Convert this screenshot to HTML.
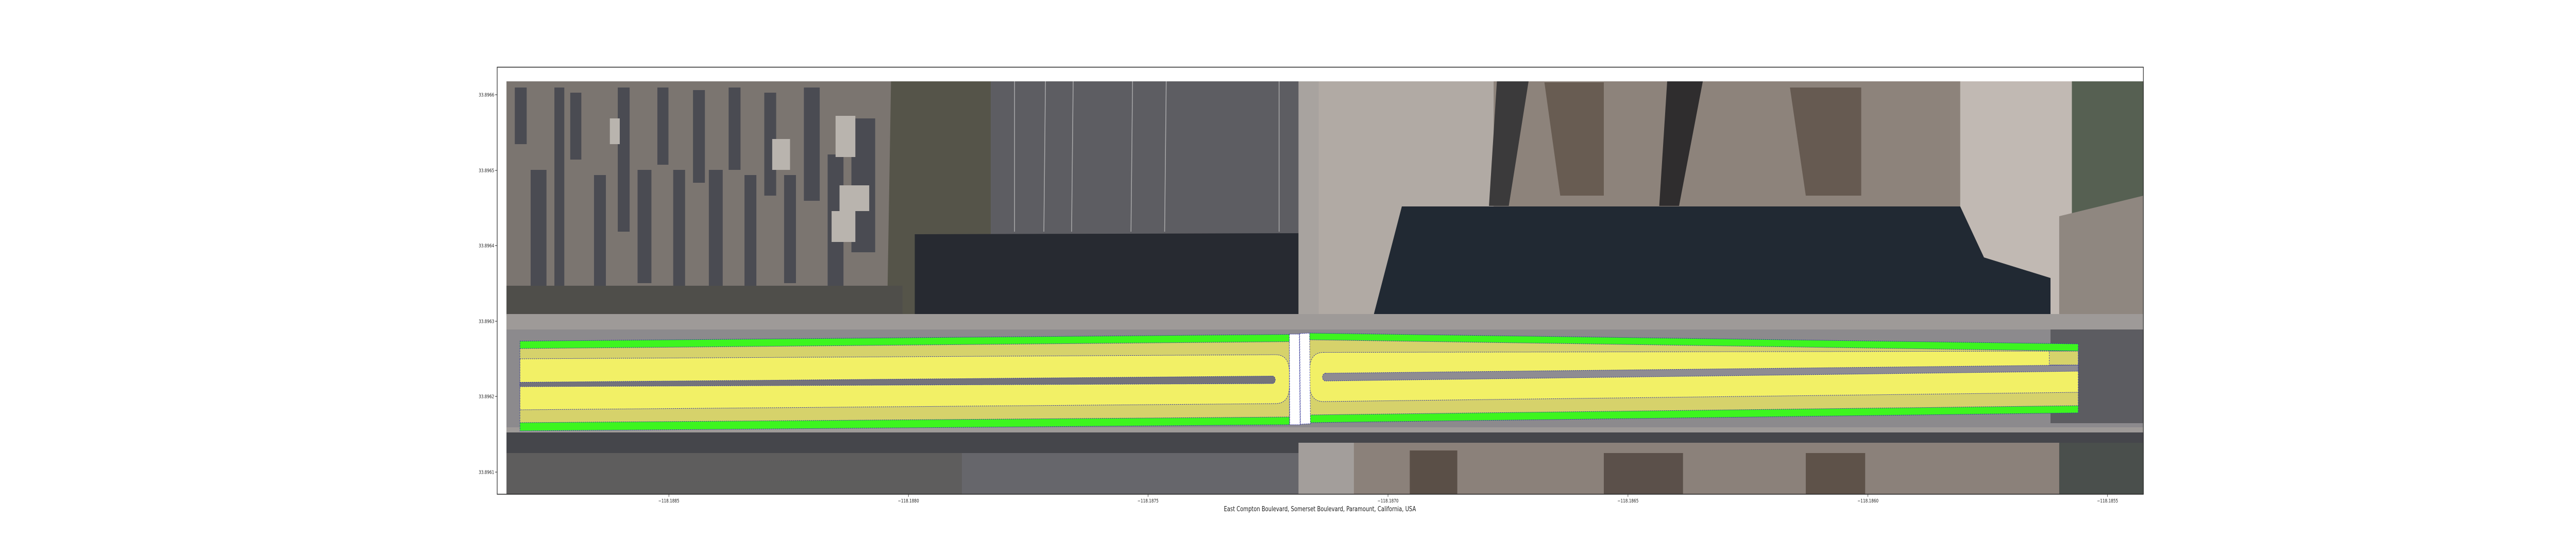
<!DOCTYPE html>
<html><head><meta charset="utf-8"><style>
html,body{margin:0;padding:0;background:#fff;width:100%;height:100%;overflow:hidden;}
svg{display:block;position:absolute;left:0;top:0;width:100vw;height:100vh;}
text{font-family:"DejaVu Sans","Liberation Sans",sans-serif;fill:#222;}
</style></head><body>
<svg viewBox="0 0 6505 1080" preserveAspectRatio="none" xmlns="http://www.w3.org/2000/svg">
<rect width="6505" height="1080" fill="#fff"/>
<defs><clipPath id="img"><rect x="1279" y="158" width="4134" height="802"/></clipPath></defs>
<g clip-path="url(#img)">
<rect x="1279" y="158" width="4134" height="802" fill="#77726f"/>
<rect x="1279" y="158" width="1000" height="455" fill="#7b7570"/>
<g fill="#4a4b52">
<rect x="1300" y="170" width="30" height="110"/><rect x="1340" y="330" width="40" height="230"/>
<rect x="1400" y="170" width="25" height="430"/><rect x="1440" y="180" width="28" height="130"/>
<rect x="1500" y="340" width="30" height="230"/><rect x="1560" y="170" width="30" height="280"/>
<rect x="1610" y="330" width="35" height="220"/><rect x="1660" y="170" width="28" height="150"/>
<rect x="1700" y="330" width="30" height="250"/><rect x="1750" y="175" width="30" height="180"/>
<rect x="1790" y="330" width="35" height="240"/><rect x="1840" y="170" width="30" height="160"/>
<rect x="1880" y="340" width="30" height="220"/><rect x="1930" y="180" width="30" height="200"/>
<rect x="1980" y="340" width="30" height="210"/><rect x="2030" y="170" width="40" height="220"/>
<rect x="2090" y="300" width="40" height="300"/><rect x="2150" y="230" width="60" height="260"/>
</g>
<g fill="#b9b4ae">
<rect x="2110" y="225" width="50" height="80"/><rect x="2120" y="360" width="75" height="50"/>
<rect x="2100" y="410" width="60" height="60"/><rect x="2250" y="190" width="25" height="100"/>
<rect x="1950" y="270" width="45" height="60"/><rect x="1540" y="230" width="25" height="50"/>
</g>
<polygon points="2250,158 2502,158 2502,453 2440,620 2240,620" fill="#555449"/>
<rect x="1279" y="555" width="1000" height="58" fill="#4f4e4a"/>
<rect x="2502" y="158" width="777" height="300" fill="#5d5d62"/>
<polygon points="2310,455 3279,453 3279,625 2310,625" fill="#272a31"/>
<g stroke="#c8c8c8" stroke-width="2" opacity="0.7">
<line x1="2562" y1="158" x2="2562" y2="450"/><line x1="2640" y1="158" x2="2636" y2="450"/>
<line x1="2710" y1="158" x2="2706" y2="450"/><line x1="2860" y1="158" x2="2856" y2="450"/>
<line x1="2945" y1="158" x2="2941" y2="450"/><line x1="3230" y1="158" x2="3230" y2="450"/>
</g>
<polygon points="3279,158 3370,158 3330,625 3279,625" fill="#a8a39f"/>
<polygon points="3330,158 3772,158 3772,401 3464,626 3330,626" fill="#b1aaa4"/>
<rect x="3772" y="158" width="1180" height="245" fill="#8d837b"/>
<polygon points="3780,158 3860,158 3810,400 3760,400" fill="#3b3a3b"/>
<polygon points="4210,158 4300,158 4240,400 4190,400" fill="#2f2d2e"/>
<polygon points="3900,160 4050,160 4050,380 3940,380" fill="#5f5248" opacity="0.8"/>
<polygon points="4520,170 4700,170 4700,380 4560,380" fill="#5c5047" opacity="0.8"/>
<rect x="4950" y="158" width="282" height="470" fill="#c1b9b3"/>
<polygon points="3540,401 4950,401 5010,500 5178,540 5178,626 3464,626" fill="#212933"/>
<rect x="5232" y="158" width="181" height="470" fill="#566052"/>
<polygon points="5200,420 5413,380 5413,626 5200,626" fill="#8f8780"/>
<rect x="1279" y="610" width="4134" height="236" fill="#9e9a98"/>
<rect x="1279" y="640" width="4134" height="190" fill="#8c8a8d"/>
<rect x="5178" y="640" width="235" height="182" fill="#5c5c61"/>
<rect x="1279" y="840" width="4134" height="40" fill="#45464b"/>
<rect x="1279" y="880" width="1150" height="80" fill="#5e5d5d"/>
<rect x="2429" y="880" width="850" height="80" fill="#66666b"/>
<rect x="3279" y="860" width="140" height="100" fill="#a39e9b"/>
<rect x="3419" y="860" width="1960" height="100" fill="#8b817a"/>
<rect x="3560" y="875" width="120" height="85" fill="#5a4f47"/>
<rect x="4050" y="880" width="200" height="80" fill="#5b504a"/>
<rect x="4560" y="880" width="150" height="80" fill="#5e5249"/>
<rect x="5200" y="860" width="213" height="100" fill="#4a4f4c"/>
<g stroke="#2b2fa8" stroke-width="1" stroke-dasharray="3,2">
<polygon points="1313,662.6 3256,649.5 3256,825 1313,837" fill="#3df51f"/>
<polygon points="1313,677 3256,663.6 3256,810 1313,821" fill="#d6d26b"/>
<path d="M1313,697 L3221,689 Q3256,689 3256,724 L3256,749 Q3256,784 3221,784 L1313,796 Z" fill="#f2f066"/>
<path d="M1313,742.6 L3214,730.5 A7.3,7.3 0 0 1 3214,745 L1313,751 Z" fill="#74737a"/>
<polygon points="3307,647 5248,668 5248,802 3307,821" fill="#3df51f"/>
<polygon points="3307,660 5248,682 5248,788 3307,806" fill="#d6d26b"/>
<path d="M3342,684.5 L5248,682 L5248,762 L3342,780 Q3307,780 3307,745 L3307,720 Q3307,684.5 3342,684.5 Z" fill="#f2f066"/>
<path d="M3347,725 L5248,709 L5248,721 L3347,740 A7.5,7.5 0 0 1 3347,725 Z" fill="#8e8c92"/>
<rect x="5175" y="682" width="73" height="27" fill="#d6d26b"/>
<polygon points="3256,649 3281,649 3283,825 3257,825" fill="#ffffff"/>
<polygon points="3282,648 3307,647 3309,823 3284,824" fill="#ffffff"/>
</g>
</g>
<rect x="1255.5" y="130.5" width="4157" height="829.5" fill="none" stroke="#222" stroke-width="1.5"/>
<g stroke="#222" stroke-width="1">
<line x1="1250" y1="184" x2="1255" y2="184"/><line x1="1250" y1="331" x2="1255" y2="331"/>
<line x1="1250" y1="477" x2="1255" y2="477"/><line x1="1250" y1="624" x2="1255" y2="624"/>
<line x1="1250" y1="770" x2="1255" y2="770"/><line x1="1250" y1="917" x2="1255" y2="917"/>
<line x1="1689" y1="960" x2="1689" y2="965"/><line x1="2294" y1="960" x2="2294" y2="965"/>
<line x1="2899" y1="960" x2="2899" y2="965"/><line x1="3505" y1="960" x2="3505" y2="965"/>
<line x1="4111" y1="960" x2="4111" y2="965"/><line x1="4717" y1="960" x2="4717" y2="965"/>
<line x1="5322" y1="960" x2="5322" y2="965"/>
</g>
<g font-size="9.5" text-anchor="end">
<text x="1248" y="187.5">33.8966</text><text x="1248" y="334.5">33.8965</text>
<text x="1248" y="480.5">33.8964</text><text x="1248" y="627.5">33.8963</text>
<text x="1248" y="773.5">33.8962</text><text x="1248" y="920.5">33.8961</text>
</g>
<g font-size="9.5" text-anchor="middle">
<text x="1689" y="976">−118.1885</text><text x="2294" y="976">−118.1880</text>
<text x="2899" y="976">−118.1875</text><text x="3505" y="976">−118.1870</text>
<text x="4111" y="976">−118.1865</text><text x="4717" y="976">−118.1860</text>
<text x="5322" y="976">−118.1855</text>
</g>
<text x="3333" y="993" font-size="13" text-anchor="middle">East Compton Boulevard, Somerset Boulevard, Paramount, California, USA</text>
</svg>
</body></html>
